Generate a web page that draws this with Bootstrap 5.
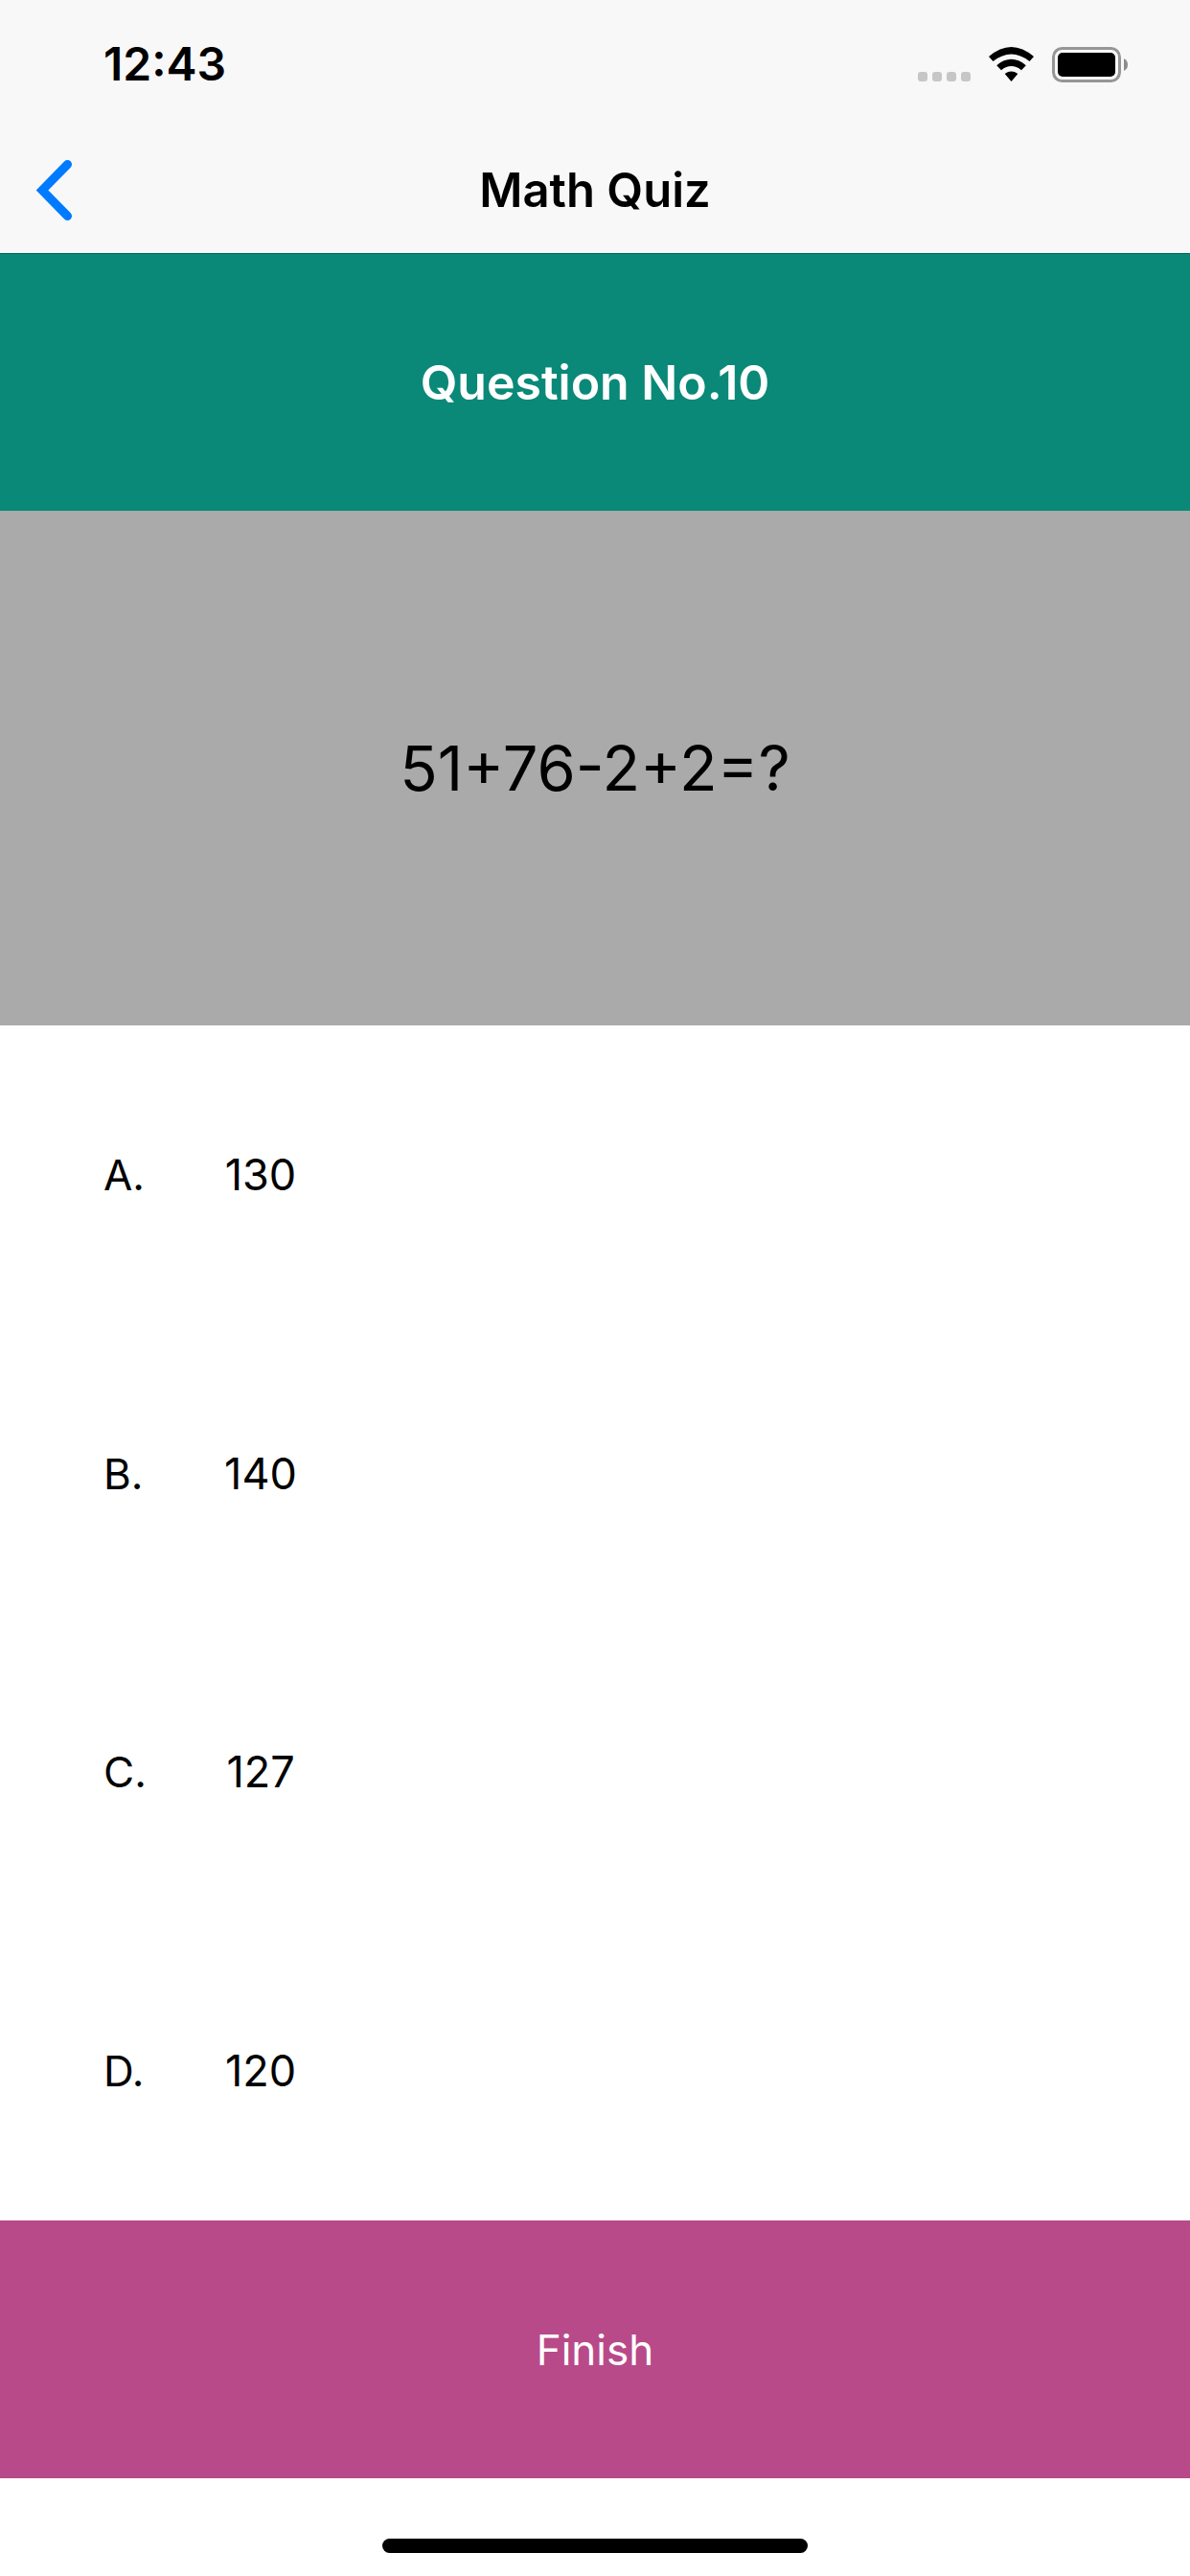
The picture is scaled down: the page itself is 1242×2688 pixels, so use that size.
<!DOCTYPE html>
<html lang="en">
<head>
<meta charset="utf-8">
<meta name="viewport" content="width=device-width, initial-scale=1">
<title>Math Quiz</title>
<link href="https://cdn.jsdelivr.net/npm/bootstrap@5.3.0/dist/css/bootstrap.min.css" rel="stylesheet">
<style>
  body { font-family: Inter, "Liberation Sans", sans-serif; color: #000; background: #fff; }
  .app-header { background: #f8f8f8; border-bottom: 1px solid #07695c; }
  .status-row { height: 134px; padding: 0 64px 0 108px; }
  .status-time { font-size: 48px; line-height: 56px; font-weight: 600; }
  .title-row { display: grid; grid-template-columns: 1fr auto 1fr; height: 130px; padding: 0 32px; }
  .title-text { font-size: 49px; line-height: 60px; font-weight: 600; }
  .question-no { background: #0a8978; height: 268px; font-size: 50px; line-height: 60px; font-weight: 600; }
  .question-body { background: #aaa; height: 537px; font-size: 65px; line-height: 80px; }
  .answer-row { font-size: 44px; line-height: 56px; padding: 0 108px; gap: 48px; }
  .answer-key { width: 72px; }
  .answer-btn { min-width: 88px; font-size: 45px; line-height: 56px; color: #000; --bs-btn-border-width: 0; }
  .finish-btn { background: #b84a8a; color: #fff; height: 269px; font-size: 44px; line-height: 56px; }
  .finish-btn:hover, .finish-btn:active { background: #a33f79; color: #fff; }
  .home-area { height: 102px; padding-bottom: 24px; }
  .home-bar { width: 444px; height: 15px; background: #000; }
</style>
</head>
<body>
<div class="d-flex flex-column min-vh-100">
  <header class="app-header">
    <div class="status-row d-flex align-items-center justify-content-between">
      <span class="status-time">12:43</span>
      <svg width="220" height="38" viewBox="958 48 220 38" role="img" aria-label="No signal, Wi-Fi on, battery full">
        <g fill="#c6c6c6">
          <rect x="958" y="75" width="10" height="10" rx="3"/>
          <rect x="973" y="75" width="10" height="10" rx="3"/>
          <rect x="988" y="75" width="10" height="10" rx="3"/>
          <rect x="1003" y="75" width="10" height="10" rx="3"/>
        </g>
        <path d="M1032 59Q1055.500 39 1079 59L1074.500 64Q1055.500 49 1036.500 64Z"/>
        <path d="M1040.200 68.200Q1055.500 55.500 1070.800 68.200L1066 73.200Q1055.500 65 1045 73.200Z"/>
        <path d="M1048.700 77Q1055.500 72.200 1062.300 77L1055.500 85Z"/>
        <rect x="1099.500" y="50.500" width="69" height="34" rx="9" fill="none" stroke="#969696" stroke-width="3"/>
        <rect x="1104" y="55" width="60" height="25" rx="5"/>
        <path d="M1173 61Q1177 63 1177 67.500T1173 74Z" fill="#8c8c8c"/>
      </svg>
    </div>
    <nav class="title-row align-items-center" aria-label="Quiz">
      <a href="#" class="d-flex" aria-label="Back">
        <svg width="50" height="68" viewBox="32 165 50 68" fill="none" stroke="#007aff" stroke-width="9" stroke-linecap="round" stroke-linejoin="miter">
          <path d="M70.500 171.500L44 198.500L70.500 225.500"/>
        </svg>
      </a>
      <h1 class="title-text m-0">Math Quiz</h1>
    </nav>
  </header>
  <main class="d-flex flex-column flex-grow-1">
    <h2 class="question-no text-white d-flex align-items-center justify-content-center m-0">Question No.10</h2>
    <p class="question-body d-flex align-items-center justify-content-center m-0">51+76-2+2=?</p>
    <ul class="list-unstyled d-flex flex-column flex-grow-1 m-0">
      <li class="answer-row d-flex align-items-center flex-fill"><label class="answer-key" for="answer-a">A.</label><button type="button" id="answer-a" class="btn answer-btn p-0">130</button></li>
      <li class="answer-row d-flex align-items-center flex-fill"><label class="answer-key" for="answer-b">B.</label><button type="button" id="answer-b" class="btn answer-btn p-0">140</button></li>
      <li class="answer-row d-flex align-items-center flex-fill"><label class="answer-key" for="answer-c">C.</label><button type="button" id="answer-c" class="btn answer-btn p-0">127</button></li>
      <li class="answer-row d-flex align-items-center flex-fill"><label class="answer-key" for="answer-d">D.</label><button type="button" id="answer-d" class="btn answer-btn p-0">120</button></li>
    </ul>
    <button type="button" class="btn finish-btn w-100 rounded-0 border-0">Finish</button>
  </main>
  <footer class="home-area d-flex align-items-end justify-content-center">
    <div class="home-bar rounded-pill"></div>
  </footer>
</div>
<script src="https://cdn.jsdelivr.net/npm/bootstrap@5.3.0/dist/js/bootstrap.bundle.min.js"></script>
</body>
</html>
